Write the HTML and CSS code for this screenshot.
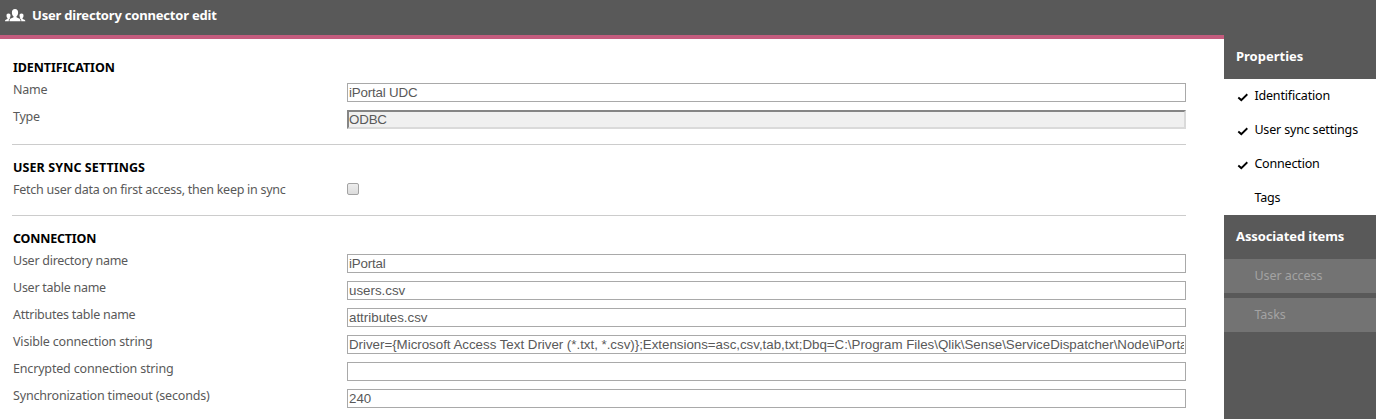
FILE: index.html
```
<!DOCTYPE html>
<html lang="en">
<head>
<meta charset="utf-8">
<title>User directory connector edit</title>
<link rel="stylesheet" href="styles.css">
</head>
<body>
<div class="page">
  <div class="main">
    <header class="topbar">
      <svg class="users" width="22" height="14" viewBox="0 0 22 14" fill="#fff"><path d="M10 0C7.900 0 6.900 1.400 6.900 3.400C6.900 5.300 7.600 6.600 8.500 7.200V8.200C7.700 9 4.900 9.300 4.500 11V12.200H15.500V11C15.100 9.300 12.300 9 11.500 8.200V7.200C12.400 6.600 13.100 5.300 13.100 3.400C13.100 1.400 12.100 0 10 0Z"/><path d="M3.500 4.500C2 4.500 1.500 5.400 1.500 6.700C1.500 7.900 2 8.700 2.500 9.100V9.800C2 10.500.3 10.500 0 11.700V12.200H3.800V11C4.100 9.900 5 9.400 5.800 9L4.700 8.700C5.200 8.200 5.500 7.500 5.500 6.700C5.500 5.400 5 4.500 3.500 4.500Z"/><path d="M16.500 4.500C18 4.500 18.500 5.400 18.500 6.700C18.500 7.900 18 8.700 17.500 9.100V9.800C18 10.500 20 10.500 20.300 11.700V12.200H16.200V11C15.900 9.900 15 9.400 14.200 9L15.300 8.700C14.800 8.200 14.500 7.500 14.500 6.700C14.500 5.400 15 4.500 16.500 4.500Z"/></svg>
      <h1>User directory connector edit</h1>
    </header>
    <div class="form">
      <section class="group">
        <h2 class="ident">IDENTIFICATION</h2>
        <label class="row"><span>Name</span><input class="tight" type="text" value="iPortal UDC"></label>
        <label class="row"><span>Type</span><input class="disabled tight" type="text" value="ODBC" disabled></label>
      </section>
      <section class="group sync">
        <h2 class="wide">USER SYNC SETTINGS</h2>
        <label class="row"><span>Fetch user data on first access, then keep in sync</span><input class="check" type="checkbox"></label>
      </section>
      <section class="group">
        <h2 class="conn">CONNECTION</h2>
        <label class="row"><span>User directory name</span><input class="tight" type="text" value="iPortal"></label>
        <label class="row"><span>User table name</span><input type="text" value="users.csv"></label>
        <label class="row"><span>Attributes table name</span><input type="text" value="attributes.csv"></label>
        <label class="row"><span class="loose">Visible connection string</span><input class="driver" type="text" value="Driver={Microsoft Access Text Driver (*.txt, *.csv)};Extensions=asc,csv,tab,txt;Dbq=C:\Program Files\Qlik\Sense\ServiceDispatcher\Node\iPortal"></label>
        <label class="row"><span class="loose">Encrypted connection string</span><input type="text" value=""></label>
        <label class="row"><span class="loose">Synchronization timeout (seconds)</span><input type="text" value="240"></label>
      </section>
    </div>
  </div>
  <aside class="side">
    <h3 class="props">Properties</h3>
    <ul class="list">
      <li><svg class="tick" width="12" height="9" viewBox="0 0 12 9"><path d="M1.300 4.600L4.300 7.100L10.300 1.300" fill="none" stroke="#000" stroke-width="1.900"/></svg><span>Identification</span></li>
      <li><svg class="tick" width="12" height="9" viewBox="0 0 12 9"><path d="M1.300 4.600L4.300 7.100L10.300 1.300" fill="none" stroke="#000" stroke-width="1.900"/></svg><span>User sync settings</span></li>
      <li><svg class="tick" width="12" height="9" viewBox="0 0 12 9"><path d="M1.300 4.600L4.300 7.100L10.300 1.300" fill="none" stroke="#000" stroke-width="1.900"/></svg><span>Connection</span></li>
      <li><span class="plain">Tags</span></li>
    </ul>
    <h3 class="assoc">Associated items</h3>
    <div class="off">User access</div>
    <div class="off">Tasks</div>
  </aside>
</div>
</body>
</html>
```
FILE: styles.css
```
* { box-sizing: border-box; }
body { margin: 0; font-family: "Noto Sans", sans-serif; font-size: 12.5px; color: #595959; background: #fff; }
h1, h2, h3, ul { margin: 0; padding: 0; }
.page { display: flex; height: 419px; overflow: hidden; }
.main { flex: 1; min-width: 0; }
.topbar { display: flex; height: 39px; padding: 9px 0 0 5px; background: #595959; border-bottom: 4px solid #c45c7e; }
.users { flex: none; margin-right: 5px; }
h1 { font-size: 13px; line-height: 12px; letter-spacing: -0.2px; color: #fff; white-space: nowrap; }
.form { padding: 19px 38px 0 12px; }
.group { border-bottom: 1px solid #ccc; margin-bottom: 13px; padding-bottom: 12px; }
.sync { padding-bottom: 10px; }
.group:last-child { border: 0; }
h2 { font-size: 12.5px; line-height: 20px; height: 20px; padding-left: 1px; color: #000; white-space: nowrap; }
.ident { letter-spacing: -0.08px; }
.wide { letter-spacing: 0.09px; }
.conn { letter-spacing: -0.2px; }
.row { display: flex; height: 27px; align-items: flex-start; }
.row span { width: 335px; flex: none; line-height: 20px; padding: 2px 0 0 1px; letter-spacing: -0.26px; white-space: nowrap; }
.row .loose { letter-spacing: -0.17px; }
.row input { flex: 1; min-width: 0; height: 19px; margin: 5px 0 0; padding: 0 1px; border: 1px solid #a9a9a9; background: #fff; color: #595959; font: 13.333px "Liberation Sans", sans-serif; }
.row .tight { letter-spacing: -0.18px; }
.row .driver { letter-spacing: -0.02px; }
.row .disabled { border: 2px solid; border-color: #858585 #dadada #dadada #858585; padding: 0; background: #f0f0f0; }
.row .check { flex: none; appearance: none; width: 12px; height: 12px; margin: 5px 0 0; border: 1px solid #a3a3a3; border-radius: 2px; background: linear-gradient(#ededed, #dcdcdc); }
.side { width: 152px; background: #595959; padding-top: 35px; }
h3 { height: 44px; line-height: 43px; padding-left: 12px; font-size: 13px; color: #fff; white-space: nowrap; }
.assoc { letter-spacing: -0.12px; }
.list { list-style: none; background: #fff; color: #000; letter-spacing: -0.17px; }
.list li { display: flex; height: 34px; line-height: 34px; padding-left: 13px; white-space: nowrap; }
.tick { margin: 14px 5.400px 0 0; flex: none; }
.plain { padding-left: 17.400px; }
.off { height: 34px; line-height: 33px; margin-bottom: 5px; padding-left: 30.400px; letter-spacing: -0.06px; background: #737373; color: #a3a3a3; }
```
